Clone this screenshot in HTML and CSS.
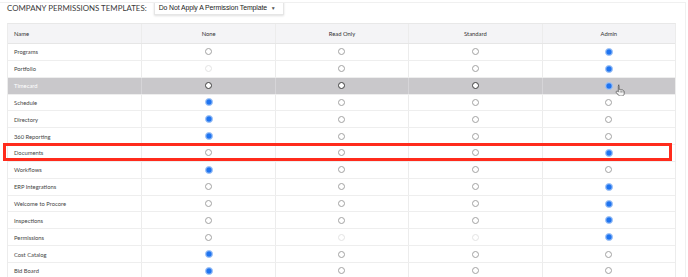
FILE: index.html
```html
<!DOCTYPE html>
<html lang="en">
<head>
    <meta charset="UTF-8">
    <meta name="viewport" content="width=device-width, initial-scale=1.0">
    <title>Company Permissions</title>
    <link rel="stylesheet" href="styles.css">
</head>
<body>
    <div id="page">
        <div class="templates-bar">
            <span class="templates-title">COMPANY PERMISSIONS TEMPLATES:</span>
            <div class="template-select">
                <span>Do Not Apply A Permission Template</span>
                <span class="caret">&#9660;</span>
            </div>
        </div>

        <div class="table-wrap">
            <div class="perm-table">
                <div class="perm-row head">
                    <div class="cell name">Name</div>
                    <div class="cell">None</div>
                    <div class="cell">Read Only</div>
                    <div class="cell">Standard</div>
                    <div class="cell">Admin</div>
                </div>

                <div class="perm-row">
                    <div class="cell name">Programs</div>
                    <div class="cell"><span class="radio"></span></div>
                    <div class="cell"><span class="radio"></span></div>
                    <div class="cell"><span class="radio"></span></div>
                    <div class="cell"><span class="radio on"></span></div>
                </div>
                <div class="perm-row">
                    <div class="cell name">Portfolio</div>
                    <div class="cell"><span class="radio off"></span></div>
                    <div class="cell"><span class="radio"></span></div>
                    <div class="cell"><span class="radio"></span></div>
                    <div class="cell"><span class="radio on"></span></div>
                </div>
                <div class="perm-row hover">
                    <div class="cell name">Timecard</div>
                    <div class="cell"><span class="radio"></span></div>
                    <div class="cell"><span class="radio"></span></div>
                    <div class="cell"><span class="radio"></span></div>
                    <div class="cell"><span class="radio on"></span></div>
                </div>
                <div class="perm-row">
                    <div class="cell name">Schedule</div>
                    <div class="cell"><span class="radio on"></span></div>
                    <div class="cell"><span class="radio"></span></div>
                    <div class="cell"><span class="radio"></span></div>
                    <div class="cell"><span class="radio"></span></div>
                </div>
                <div class="perm-row">
                    <div class="cell name">Directory</div>
                    <div class="cell"><span class="radio on"></span></div>
                    <div class="cell"><span class="radio"></span></div>
                    <div class="cell"><span class="radio"></span></div>
                    <div class="cell"><span class="radio"></span></div>
                </div>
                <div class="perm-row">
                    <div class="cell name">360 Reporting</div>
                    <div class="cell"><span class="radio on"></span></div>
                    <div class="cell"><span class="radio"></span></div>
                    <div class="cell"><span class="radio"></span></div>
                    <div class="cell"><span class="radio"></span></div>
                </div>
                <div class="perm-row">
                    <div class="cell name">Documents</div>
                    <div class="cell"><span class="radio"></span></div>
                    <div class="cell"><span class="radio"></span></div>
                    <div class="cell"><span class="radio"></span></div>
                    <div class="cell"><span class="radio on"></span></div>
                </div>
                <div class="perm-row">
                    <div class="cell name">Workflows</div>
                    <div class="cell"><span class="radio on"></span></div>
                    <div class="cell"><span class="radio"></span></div>
                    <div class="cell"><span class="radio"></span></div>
                    <div class="cell"><span class="radio"></span></div>
                </div>
                <div class="perm-row">
                    <div class="cell name">ERP Integrations</div>
                    <div class="cell"><span class="radio"></span></div>
                    <div class="cell"><span class="radio"></span></div>
                    <div class="cell"><span class="radio"></span></div>
                    <div class="cell"><span class="radio on"></span></div>
                </div>
                <div class="perm-row">
                    <div class="cell name">Welcome to Procore</div>
                    <div class="cell"><span class="radio"></span></div>
                    <div class="cell"><span class="radio"></span></div>
                    <div class="cell"><span class="radio"></span></div>
                    <div class="cell"><span class="radio on"></span></div>
                </div>
                <div class="perm-row">
                    <div class="cell name">Inspections</div>
                    <div class="cell"><span class="radio"></span></div>
                    <div class="cell"><span class="radio"></span></div>
                    <div class="cell"><span class="radio"></span></div>
                    <div class="cell"><span class="radio on"></span></div>
                </div>
                <div class="perm-row">
                    <div class="cell name">Permissions</div>
                    <div class="cell"><span class="radio"></span></div>
                    <div class="cell"><span class="radio off"></span></div>
                    <div class="cell"><span class="radio off"></span></div>
                    <div class="cell"><span class="radio on"></span></div>
                </div>
                <div class="perm-row">
                    <div class="cell name">Cost Catalog</div>
                    <div class="cell"><span class="radio on"></span></div>
                    <div class="cell"><span class="radio"></span></div>
                    <div class="cell"><span class="radio"></span></div>
                    <div class="cell"><span class="radio"></span></div>
                </div>
                <div class="perm-row">
                    <div class="cell name">Bid Board</div>
                    <div class="cell"><span class="radio on"></span></div>
                    <div class="cell"><span class="radio"></span></div>
                    <div class="cell"><span class="radio"></span></div>
                    <div class="cell"><span class="radio"></span></div>
                </div>
            </div>

            <!-- red callout around the Documents row -->
            <div class="callout"></div>

            <!-- mouse pointer over the Timecard row -->
            <svg class="pointer" width="11" height="12" viewBox="0 0 11 12">
                <path d="M3.2 1.2c.5 0 .9.4.9.9v3.4l.3-.1c.4-.3 1-.2 1.3.2l.1.1c.4-.2.9-.1 1.2.3.4-.2 1-.1 1.2.4l.1.2c.5 0 .9.4.9.9v2.1c0 1.4-1.1 2.5-2.5 2.5H5.4c-.8 0-1.5-.4-2-1L1.3 8.6c-.3-.4-.3-1 .1-1.3.4-.3.9-.3 1.2 0l.7.6V2.1c0-.5.4-.9.9-.9z" fill="#f4f4f4" stroke="#555" stroke-width=".8"/>
                <path d="M5.2 6.4v2.2M6.6 6.6v2M8 7v1.6" stroke="#666" stroke-width=".6"/>
            </svg>
        </div>
    </div>
</body>
</html>
```

FILE: styles.css
```css
body {
    margin: 0;
    background-color: #fff;
    font-family: Lato, "Open Sans", sans-serif;
    color: #444;
}

#page {
    width: 685px;
    height: 275px;
    margin-top: 2px;
    border-top: 1px solid #f0f0f0;
    border-right: 1px solid #f0f0f0;
    overflow: hidden;
}

.templates-bar {
    display: flex;
    align-items: center;
    gap: 7px;
    height: 15px;
    margin-top: -3px;
    padding-left: 7px;
}

.templates-title {
    font-size: 7.9px;
    color: #3b3b3b;
}

.template-select {
    display: flex;
    align-items: center;
    justify-content: space-between;
    width: 130px;
    height: 15px;
    box-sizing: border-box;
    padding: 1px 7px 0 4px;
    background-color: #fff;
    border: 1px solid #e6e6e6;
    border-top: none;
    box-shadow: 0 1px 2px rgba(0, 0, 0, 0.12);
    font-family: "Liberation Sans", Arial, sans-serif;
    font-size: 6.9px;
    letter-spacing: -0.1px;
    color: #222;
}

.caret {
    font-size: 5px;
    color: #555;
}

.table-wrap {
    position: relative;
    margin-top: 8px;
    padding-left: 7px;
}

.perm-table {
    width: 667px;
    border-left: 1px solid #ececec;
    border-right: 1px solid #ececec;
    border-top: 1px solid #e8e8e8;
}

.perm-row {
    display: grid;
    grid-template-columns: repeat(5, 1fr);
    height: 16.85px;
    box-sizing: border-box;
    border-bottom: 1px solid #eeeeee;
    font-size: 5.8px;
    color: #444;
}

.perm-row.head {
    height: 20px;
    background-color: #f4f4f6;
    border-bottom-color: #e6e6e6;
    color: #333;
}

.perm-row.hover {
    background-color: #c9c8cb;
    color: #fff;
}

.cell {
    display: flex;
    align-items: center;
    justify-content: center;
    border-left: 1px solid #ececec;
}

.cell.name {
    justify-content: flex-start;
    padding-left: 6px;
    border-left: none;
}

.perm-row.hover .cell {
    border-left-color: #d6d5d8;
}

.radio {
    width: 7px;
    height: 7px;
    box-sizing: border-box;
    border: 1px solid #a2a2a2;
    border-radius: 50%;
    background-color: #fff;
}

.radio.on {
    width: 8px;
    height: 8px;
    border: 1.6px solid #a9c9f7;
    background-color: #1f74f0;
    box-shadow: inset 0 0 0 0.5px #5e9cf4;
}

.radio.off {
    border-color: #e3e3e3;
}

.perm-row.hover .radio {
    border-color: #3d3d3d;
    border-width: 1.3px;
}

.perm-row.hover .radio.on {
    border: 1.6px solid #a9c9f7;
}

.callout {
    position: absolute;
    left: 3px;
    top: 120px;
    width: 669px;
    height: 18px;
    box-sizing: border-box;
    border: 3px solid #ff2b1c;
}

.pointer {
    position: absolute;
    left: 615px;
    top: 61px;
}
```
